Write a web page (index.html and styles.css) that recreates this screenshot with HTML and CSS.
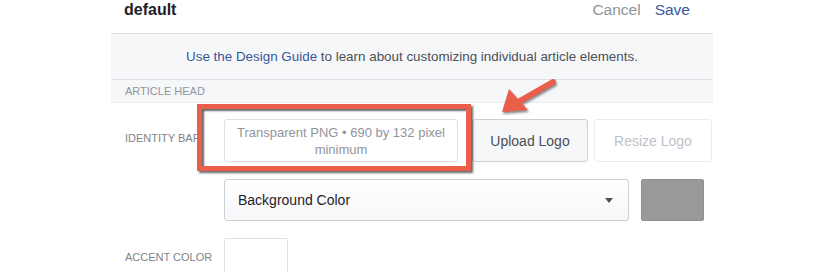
FILE: index.html
```html
<!DOCTYPE html>
<html lang="en">
<head>
    <meta charset="UTF-8">
    <title>default</title>
    <link rel="stylesheet" href="styles.css">
</head>
<body>
<div class="panel">
    <div class="top">
        <span class="title">default</span>
        <span class="actions"><a class="cancel">Cancel</a><a class="save">Save</a></span>
    </div>
    <div class="info">
        <a class="link">Use the Design Guide</a> to learn about customizing individual article elements.
    </div>
    <div class="section">ARTICLE HEAD</div>

    <div class="row">
        <div class="label">IDENTITY BAR</div>
        <div class="controls">
            <div class="drop">Transparent PNG • 690 by 132 pixel minimum</div>
            <button class="btn upload">Upload Logo</button>
            <button class="btn resize">Resize Logo</button>
        </div>
    </div>
    <div class="row">
        <div class="label"></div>
        <div class="controls">
            <div class="select">Background Color<span class="caret"></span></div>
            <div class="swatch"></div>
        </div>
    </div>
    <div class="row">
        <div class="label">ACCENT COLOR</div>
        <div class="controls">
            <div class="accent"></div>
        </div>
    </div>

    <!-- annotation -->
    <div class="mark"></div>
    <svg class="arrow" width="70" height="45" viewBox="0 0 70 45">
        <line x1="59" y1="6" x2="24" y2="26" stroke="#ea5f4c" stroke-width="6" stroke-linecap="round"/>
        <polygon points="8,36 15,13 34,34" fill="#ea5f4c"/>
    </svg>
</div>
</body>
</html>
```

FILE: styles.css
```css
*{
    margin: 0;
    padding: 0;
    box-sizing: border-box;
}
body{
    font-family: "Liberation Sans", Arial, sans-serif;
    background: #fff;
    overflow: hidden;
}
.panel{
    width: 602px;
    margin-left: 111px;
    position: relative;
}
.top{
    height: 34px;
    border-bottom: 1px solid #dddfe2;
    display: flex;
    justify-content: space-between;
    align-items: flex-start;
    padding: 0 23px 0 13px;
    line-height: 20px;
}
.title{
    font-size: 16px;
    font-weight: bold;
    color: #1d2129;
}
.actions a{
    font-size: 15.5px;
    margin-left: 14px;
}
.cancel{
    color: #90949c;
}
.save{
    color: #365899;
}
.info{
    height: 46px;
    background: #f6f7f9;
    border-bottom: 1px solid #dddfe2;
    text-align: center;
    font-size: 13.4px;
    line-height: 45px;
    color: #4b4f56;
}
.link{
    color: #365899;
}
.section{
    height: 23px;
    background: #f6f7f9;
    border-bottom: 1px solid #e9ebee;
    padding-left: 14px;
    font-size: 11px;
    line-height: 23px;
    color: #90949c;
}
.row{
    display: flex;
    padding-left: 14px;
    margin-top: 16px;
}
.row + .row{
    margin-top: 17px;
}
.label{
    width: 99px;
    flex: none;
    padding-top: 13px;
    font-size: 11px;
    color: #7f838a;
    white-space: nowrap;
    overflow: hidden;
}
.controls{
    display: flex;
}
.drop{
    width: 234px;
    height: 43px;
    border: 1px solid #dddfe2;
    border-radius: 3px;
    padding: 4px 1px 0;
    text-align: center;
    font-size: 13px;
    line-height: 17px;
    color: #90949c;
}
.btn{
    height: 43px;
    border-radius: 3px;
    font-family: inherit;
    font-size: 14px;
}
.upload{
    width: 116px;
    margin-left: 14px;
    background: #f6f7f9;
    border: 1px solid #ccd0d5;
    color: #4b4f56;
}
.resize{
    width: 118px;
    margin-left: 6px;
    background: #fff;
    border: 1px solid #e9ebee;
    color: #bec2c9;
}
.select{
    width: 405px;
    height: 42px;
    border: 1px solid #ccd0d5;
    border-radius: 3px;
    background: linear-gradient(#fff, #f6f7f9);
    padding-left: 13px;
    font-size: 14px;
    line-height: 40px;
    color: #1d2129;
    position: relative;
}
.caret{
    position: absolute;
    right: 15px;
    top: 18px;
    border-left: 4px solid transparent;
    border-right: 4px solid transparent;
    border-top: 5px solid #4b4f56;
}
.swatch{
    width: 63px;
    height: 42px;
    margin-left: 12px;
    background: #999;
    border: 1px solid #8f8f8f;
    border-radius: 2px;
}
.accent{
    width: 64px;
    height: 34px;
    border: 1px solid #dddfe2;
    border-bottom: 0;
    border-radius: 2px 2px 0 0;
}
.mark{
    position: absolute;
    left: 86px;
    top: 104px;
    width: 274px;
    height: 67px;
    border: 5px solid #ea5f4c;
    box-shadow: 2px 2px 2px rgba(0,0,0,.6), inset 2px 2px 2px rgba(0,0,0,.6);
}
.arrow{
    position: absolute;
    left: 383px;
    top: 76px;
    filter: drop-shadow(1px 2px 1px rgba(0,0,0,.45));
}
```
